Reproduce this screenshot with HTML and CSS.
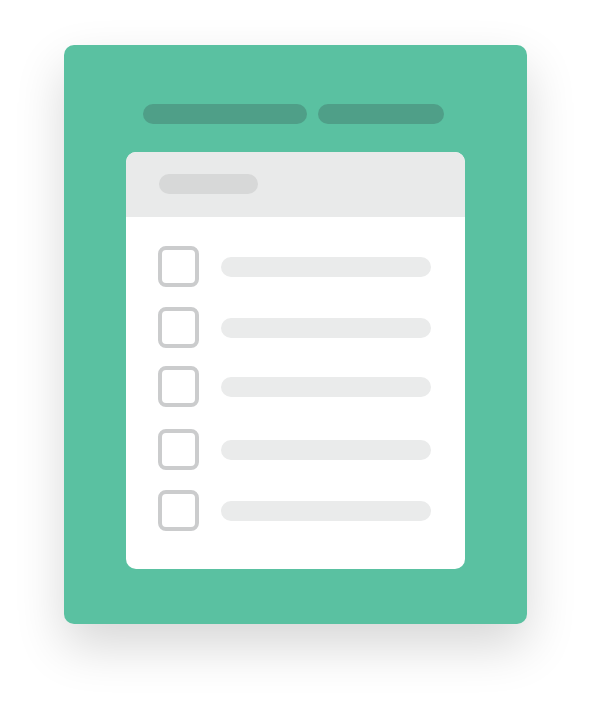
FILE: index.html
```html
<!DOCTYPE html>
<html>
<head>
<meta charset="utf-8">
<link rel="stylesheet" href="styles.css">
</head>
<body>
<div class="board">
  <div class="tabs">
    <div class="tab tab-long"></div>
    <div class="tab tab-short"></div>
  </div>
  <div class="sheet">
    <div class="sheet-header">
      <div class="title-pill"></div>
    </div>
    <div class="list">
      <div class="row"><div class="check"></div><div class="line"></div></div>
      <div class="row"><div class="check"></div><div class="line"></div></div>
      <div class="row"><div class="check"></div><div class="line"></div></div>
      <div class="row"><div class="check"></div><div class="line"></div></div>
      <div class="row"><div class="check"></div><div class="line"></div></div>
    </div>
  </div>
</div>
</body>
</html>
```
FILE: styles.css
```css
html, body {
  margin: 0;
  padding: 0;
  background: #ffffff;
}
body {
  width: 593px;
  height: 706px;
  overflow: hidden;
  font-family: "Liberation Sans", sans-serif;
}
.board {
  box-sizing: border-box;
  width: 463px;
  height: 579px;
  margin: 45px 0 0 64px;
  background: #5ac1a1;
  border-radius: 10px;
  box-shadow: 0 22px 50px rgba(0, 0, 0, 0.16);
  padding: 59px 0 0 62px;
}
.tabs {
  display: flex;
  gap: 11px;
  margin-left: 17px;
}
.tab {
  height: 20px;
  border-radius: 10px;
  background: #4f9f88;
}
.tab-long { width: 164px; }
.tab-short { width: 126px; }
.sheet {
  width: 339px;
  height: 417px;
  margin-top: 28px;
  background: #ffffff;
  border-radius: 10px;
  overflow: hidden;
}
.sheet-header {
  box-sizing: border-box;
  height: 65px;
  background: #e9eaea;
  padding: 22px 0 0 33px;
}
.title-pill {
  width: 99px;
  height: 20px;
  border-radius: 10px;
  background: #d7d8d8;
}
.list {
  display: flex;
  flex-direction: column;
  gap: 20px;
  padding: 29px 0 0 32px;
}
.row {
  display: flex;
  align-items: center;
  gap: 22px;
}
.row:nth-child(3) { margin-top: -2px; }
.row:nth-child(4) { margin-top: 2px; }
.check {
  box-sizing: border-box;
  width: 41px;
  height: 41px;
  border: 4.5px solid #cbcccd;
  border-radius: 8px;
}
.line {
  width: 210px;
  height: 20px;
  border-radius: 10px;
  background: #eaebeb;
}
```
